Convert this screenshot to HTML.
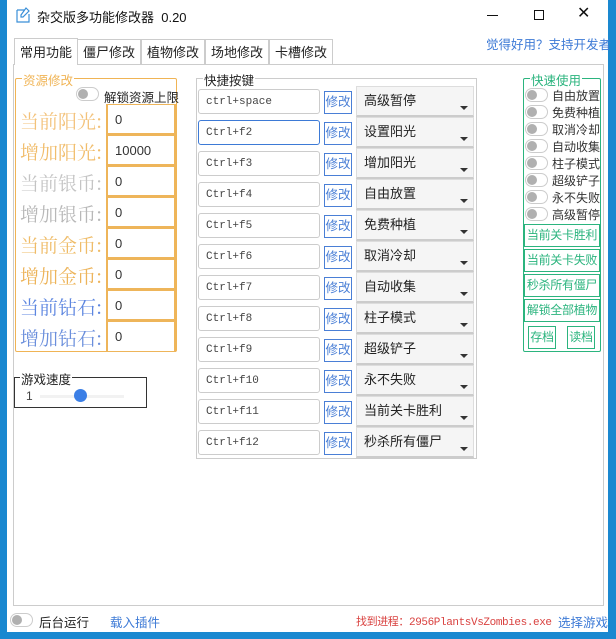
<!DOCTYPE html><html><head><meta charset="utf-8"><style>
*{margin:0;padding:0;box-sizing:border-box}
body{width:616px;height:639px;background:#1a88d0;position:relative;overflow:hidden;font-family:"Liberation Sans","Noto Sans CJK SC",sans-serif;font-size:12px;color:#222}
.a{position:absolute;white-space:nowrap}
.win{left:7px;top:0;width:601px;height:632px;background:#fff}
.tog{position:absolute;width:23px;height:14px;border:1px solid #ccc;border-radius:7px;background:#fff}
.tog:after{content:"";position:absolute;left:1px;top:1px;width:10px;height:10px;border-radius:50%;background:#b0b0b0}
.lbl{font-family:"Noto Serif CJK SC","Liberation Serif",serif;font-size:19px;left:20px}
.inp{left:106px;width:70px;height:31px;border:2px solid #eeb55a;border-top-width:1px;padding-left:7px;line-height:29px;font-size:13px;color:#333}
.hk{left:198px;width:122px;height:25px;border:1px solid #ccc;border-radius:3px;font-family:"Liberation Mono",monospace;font-size:11px;padding-left:7px;display:flex;align-items:center;color:#444}
.mb{left:324px;width:28px;height:23px;border:1px solid #4a7fd6;color:#4a7fd6;font-size:12.5px;line-height:21px;text-align:center}
.cb{left:356px;width:118px;height:31px;background:#f5f5f5;border:1px solid #ddd;border-bottom:2px solid #ccc;font-size:13px;padding-left:7px;line-height:28px}
.cb:after{content:"";position:absolute;right:5px;bottom:5px;border:4px solid transparent;border-top:4px solid #333;border-bottom:0}
.ql{left:552px;font-size:12px;color:#333;width:49px;overflow:hidden}
.gb{left:524px;width:76px;height:23px;border:1px solid #2bb47e;color:#2bb47e;font-size:12px;letter-spacing:-0.3px;line-height:21px;text-align:center;overflow:hidden}
</style></head><body>
<div class="a win"></div>
<svg class="a" style="left:16px;top:7px" width="14" height="16"><path d="M1 3h8M1 3v12h12V7M10 1l3 3-6 6H5V8z" fill="none" stroke="#3a8fd8" stroke-width="1.2"/></svg>
<div class="a" style="left:37px;top:7px;font-size:13px;color:#111">杂交版多功能修改器&nbsp;&nbsp;0.20</div>
<div class="a" style="left:487px;top:15px;width:11px;height:1px;background:#111"></div>
<div class="a" style="left:534px;top:10px;width:10px;height:10px;border:1px solid #111"></div>
<div class="a" style="left:577px;top:3px;font-size:16px;color:#111">✕</div>
<div class="a" style="left:486px;top:34px;font-size:12.5px;color:#3d7ad6">觉得好用？支持开发者</div>
<div class="a" style="left:13px;top:64px;width:591px;height:542px;border:1px solid #ccc"></div>
<div class="a" style="left:14px;top:38px;width:64px;height:27px;border:1px solid #ccc;border-bottom:none;background:#fff;font-size:13px;line-height:28px;text-align:center">常用功能</div>
<div class="a" style="left:77px;top:39px;width:64px;height:25px;border:1px solid #ccc;border-bottom:none;font-size:13px;line-height:26px;text-align:center">僵尸修改</div>
<div class="a" style="left:141px;top:39px;width:64px;height:25px;border:1px solid #ccc;border-bottom:none;font-size:13px;line-height:26px;text-align:center">植物修改</div>
<div class="a" style="left:205px;top:39px;width:64px;height:25px;border:1px solid #ccc;border-bottom:none;font-size:13px;line-height:26px;text-align:center">场地修改</div>
<div class="a" style="left:269px;top:39px;width:64px;height:25px;border:1px solid #ccc;border-bottom:none;font-size:13px;line-height:26px;text-align:center">卡槽修改</div>

<div class="a" style="left:15px;top:78px;width:162px;height:274px;border:1px solid #f0b455;border-radius:2px"></div>
<div class="a" style="left:22px;top:70px;background:#fff;color:#f0b455;font-size:12.5px;padding:0 1px">资源修改</div>
<div class="tog" style="left:76px;top:87px"></div>
<div class="a" style="left:104px;top:87px;font-size:12.5px">解锁资源上限</div>
<div class="a lbl" style="top:107px;color:#f3c27a">当前阳光:</div><div class="a inp" style="top:104px">0</div>
<div class="a lbl" style="top:138px;color:#f1bd6c">增加阳光:</div><div class="a inp" style="top:135px">10000</div>
<div class="a lbl" style="top:169px;color:#c4c4c4">当前银币:</div><div class="a inp" style="top:166px">0</div>
<div class="a lbl" style="top:200px;color:#b8b8b8">增加银币:</div><div class="a inp" style="top:197px">0</div>
<div class="a lbl" style="top:231px;color:#efbc68">当前金币:</div><div class="a inp" style="top:228px">0</div>
<div class="a lbl" style="top:262px;color:#edb45a">增加金币:</div><div class="a inp" style="top:259px">0</div>
<div class="a lbl" style="top:293px;color:#5d86e0">当前钻石:</div><div class="a inp" style="top:290px">0</div>
<div class="a lbl" style="top:324px;color:#6b8fdc">增加钻石:</div><div class="a inp" style="top:321px;border-bottom-width:1px">0</div>

<div class="a" style="left:14px;top:377px;width:133px;height:31px;border:1px solid #333"></div>
<div class="a" style="left:20px;top:369px;background:#fff;font-size:12.5px;padding:0 1px">游戏速度</div>
<div class="a" style="left:26px;top:389px;font-size:12px;color:#444">1</div>
<div class="a" style="left:40px;top:395px;width:84px;height:3px;background:#f2f2f2"></div>
<div class="a" style="left:74px;top:389px;width:13px;height:13px;border-radius:50%;background:#3b7fe6"></div>

<div class="a" style="left:196px;top:78px;width:281px;height:381px;border:1px solid #ccc"></div>
<div class="a" style="left:203px;top:70px;background:#fff;font-size:12.5px;padding:0 1px">快捷按键</div>
<div class="a hk" style="top:89px">ctrl+space</div><div class="a mb" style="top:91px">修改</div><div class="a cb" style="top:86px">高级暂停</div>
<div class="a hk" style="top:120px;border-color:#3d7ad6">Ctrl+f2</div><div class="a mb" style="top:122px">修改</div><div class="a cb" style="top:117px">设置阳光</div>
<div class="a hk" style="top:151px">Ctrl+f3</div><div class="a mb" style="top:153px">修改</div><div class="a cb" style="top:148px">增加阳光</div>
<div class="a hk" style="top:182px">Ctrl+f4</div><div class="a mb" style="top:184px">修改</div><div class="a cb" style="top:179px">自由放置</div>
<div class="a hk" style="top:213px">Ctrl+f5</div><div class="a mb" style="top:215px">修改</div><div class="a cb" style="top:210px">免费种植</div>
<div class="a hk" style="top:244px">Ctrl+f6</div><div class="a mb" style="top:246px">修改</div><div class="a cb" style="top:241px">取消冷却</div>
<div class="a hk" style="top:275px">Ctrl+f7</div><div class="a mb" style="top:277px">修改</div><div class="a cb" style="top:272px">自动收集</div>
<div class="a hk" style="top:306px">Ctrl+f8</div><div class="a mb" style="top:308px">修改</div><div class="a cb" style="top:303px">柱子模式</div>
<div class="a hk" style="top:337px">Ctrl+f9</div><div class="a mb" style="top:339px">修改</div><div class="a cb" style="top:334px">超级铲子</div>
<div class="a hk" style="top:368px">Ctrl+f10</div><div class="a mb" style="top:370px">修改</div><div class="a cb" style="top:365px">永不失败</div>
<div class="a hk" style="top:399px">Ctrl+f11</div><div class="a mb" style="top:401px">修改</div><div class="a cb" style="top:396px">当前关卡胜利</div>
<div class="a hk" style="top:430px">Ctrl+f12</div><div class="a mb" style="top:432px">修改</div><div class="a cb" style="top:427px">秒杀所有僵尸</div>

<div class="a" style="left:523px;top:78px;width:78px;height:274px;border:1px solid #2bb47e;border-radius:2px"></div>
<div class="a" style="left:530px;top:70px;background:#fff;color:#2bb47e;font-size:12.5px;padding:0 1px">快速使用</div>
<div class="tog" style="left:525px;top:88px"></div><div class="a ql" style="top:87px">自由放置</div>
<div class="tog" style="left:525px;top:105px"></div><div class="a ql" style="top:104px">免费种植</div>
<div class="tog" style="left:525px;top:122px"></div><div class="a ql" style="top:121px">取消冷却</div>
<div class="tog" style="left:525px;top:139px"></div><div class="a ql" style="top:138px">自动收集</div>
<div class="tog" style="left:525px;top:156px"></div><div class="a ql" style="top:155px">柱子模式</div>
<div class="tog" style="left:525px;top:173px"></div><div class="a ql" style="top:172px">超级铲子</div>
<div class="tog" style="left:525px;top:190px"></div><div class="a ql" style="top:189px">永不失败</div>
<div class="tog" style="left:525px;top:207px"></div><div class="a ql" style="top:206px">高级暂停</div>
<div class="a gb" style="top:224px">当前关卡胜利</div>
<div class="a gb" style="top:249px">当前关卡失败</div>
<div class="a gb" style="top:274px">秒杀所有僵尸</div>
<div class="a gb" style="top:299px">解锁全部植物</div>
<div class="a gb" style="left:528px;width:28px;top:326px">存档</div>
<div class="a gb" style="left:567px;width:28px;top:326px">读档</div>

<div class="tog" style="left:10px;top:613px"></div>
<div class="a" style="left:39px;top:612px;font-size:12.5px">后台运行</div>
<div class="a" style="left:110px;top:612px;font-size:12.5px;color:#3d7ad6">载入插件</div>
<div class="a" style="left:356px;top:613px;font-size:11px;color:#d9413f;font-family:'Liberation Mono','Noto Sans CJK SC',monospace;letter-spacing:-0.4px">找到进程：2956PlantsVsZombies.exe</div>
<div class="a" style="left:558px;top:612px;font-size:12.5px;color:#3d7ad6">选择游戏</div>
</body></html>
